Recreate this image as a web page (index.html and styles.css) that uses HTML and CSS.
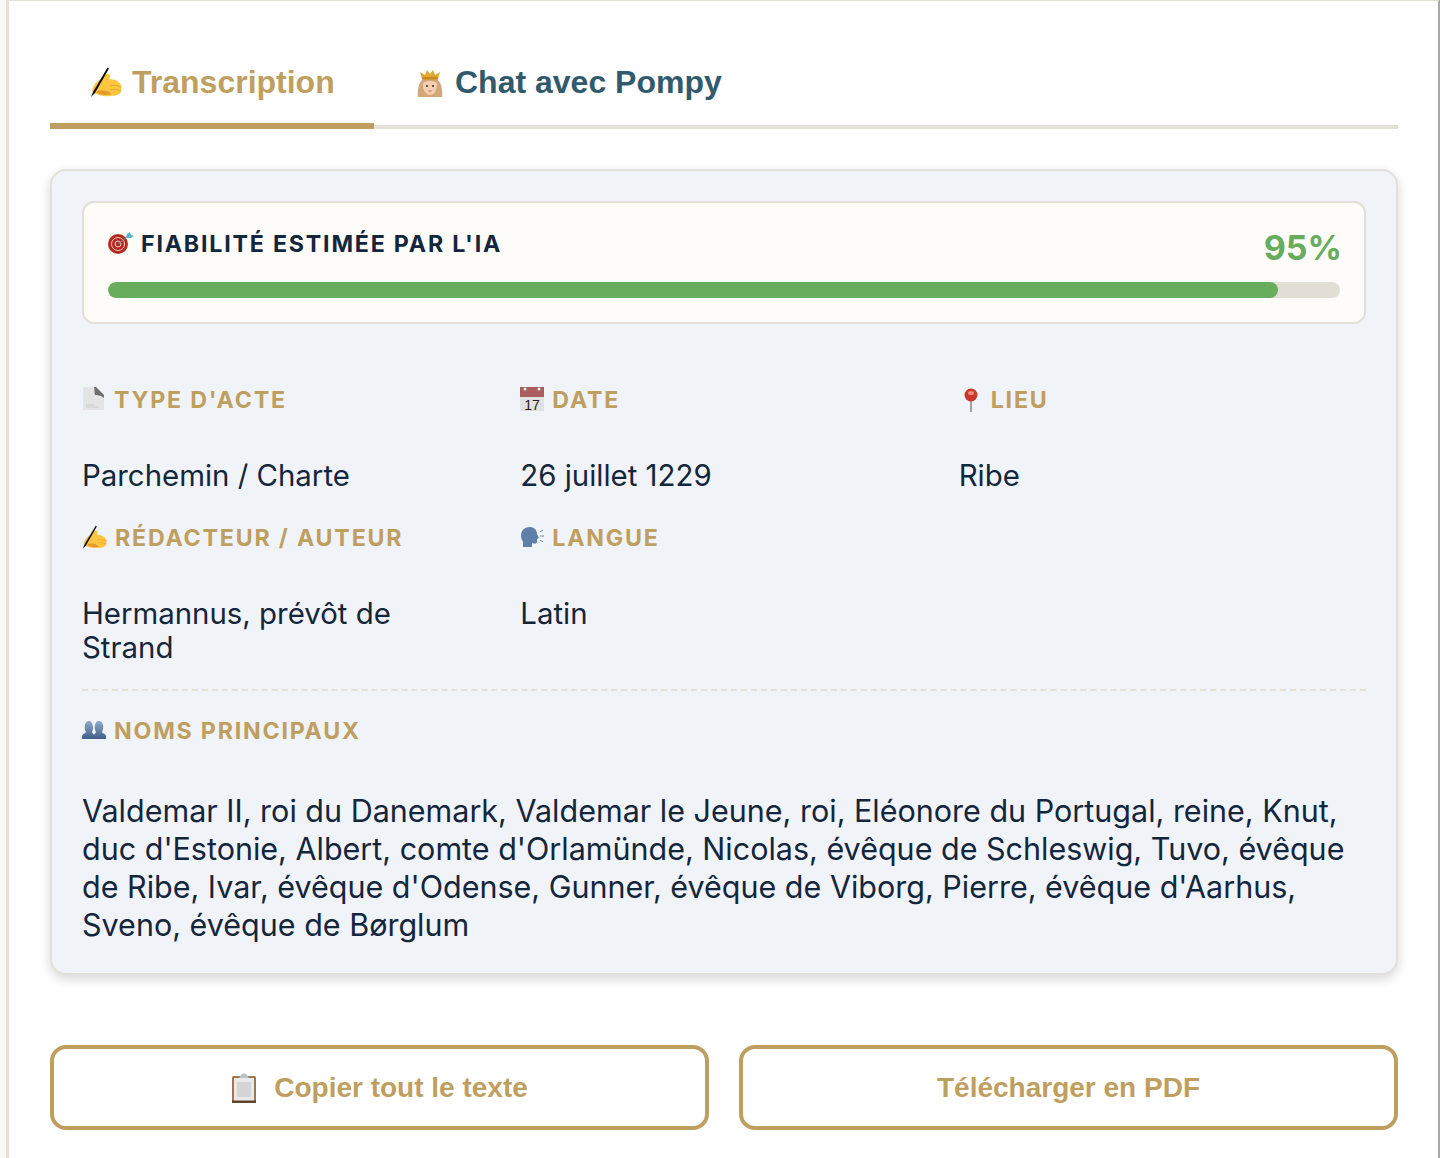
FILE: index.html
```html
<!DOCTYPE html>
<html lang="fr">
<head>
<meta charset="utf-8">
<title>Transcription</title>
<link rel="stylesheet" href="styles.css">
</head>
<body>
<svg class="defs" width="0" height="0" aria-hidden="true">
  <defs>
    <symbol id="i-writing" viewBox="0 0 32 30">
      <path d="M2 24 C3 18 7 14 11 12 L16 7 C18 6 21 8 20 10 L19 12 C24 12 29 14 31 18 C32 23 31 27 27 28 C20 30 8 30 2 24 Z" fill="#fcc63f"/>
      <path d="M6 25 C11 22 17 23 22 27 C16 29 10 28 6 25 Z" fill="#e39c2c"/>
      <path d="M20 19 C23 18 27 18 31 20 M20 23 C23 22 27 22 31 24" stroke="#e8a93a" stroke-width="1" fill="none"/>
      <path d="M1 30 L3 25 L17.500 0.500 L19 1.500 L5 26 Z" fill="#111"/>
    </symbol>
    <symbol id="i-doc" viewBox="-1 0 24 24">
      <path d="M0 0 H13 L21 8 V23 H0 Z" fill="#e4e4e4"/>
      <path d="M11 0 H13 L21 8 V11 C18 8 13 8 12 8 C11 5 12 3 11 0 Z" fill="#6f6f72"/>
      <path d="M3 18 H12 M3 20 H16" stroke="#cfcfcf" stroke-width="1"/>
    </symbol>
    <symbol id="i-cal" viewBox="0 0 24 24">
      <rect width="24" height="24" fill="#e1e1e1"/>
      <rect width="24" height="10" fill="#a85d5f"/>
      <circle cx="5" cy="2" r="1.500" fill="#f5eeee"/>
      <circle cx="19" cy="2" r="1.500" fill="#f5eeee"/>
      <text x="12" y="22.500" class="cal-num" text-anchor="middle">17</text>
    </symbol>
    <symbol id="i-pin" viewBox="0 0 16 24">
      <rect x="7.200" y="11" width="1.600" height="13" fill="#8c8c8c"/>
      <circle cx="8" cy="7" r="6.500" fill="#c9372c"/>
      <ellipse cx="8" cy="5" rx="3" ry="2" fill="#ee8a7e"/>
    </symbol>
    <symbol id="i-speak" viewBox="0 0 24 20">
      <path d="M1 9 C1 3 5 0 10 0 C14 0 17 3 17 7 L19 11 L17 12 V15 C17 16 16 17 14 16.500 L12 16 V20 H3 V15 C2 13 1 11 1 9 Z" fill="#5f80a8"/>
      <path d="M20 5 L23 3 M20 9 H24 M20 13 L23 15" stroke="#6b8bb0" stroke-width="1"/>
    </symbol>
    <symbol id="i-people" viewBox="0 0 24 20">
      <defs>
        <linearGradient id="g-people" x1="0" y1="0" x2="0" y2="1">
          <stop offset="0" stop-color="#8eabc9"/>
          <stop offset="1" stop-color="#3f5f8a"/>
        </linearGradient>
      </defs>
      <path d="M0 19 V16 C0 14 4 13 4 12 C2 9 2 1 7 1 C11 1 12 9 10 12 C10 13 12 14 12 15 C12 14 14 13 14 12 C12 9 12 1 17 1 C22 1 22 9 20 12 C20 13 24 14 24 16 V19 Z" fill="url(#g-people)"/>
    </symbol>
    <symbol id="i-target" viewBox="0 0 26 22">
      <circle cx="10" cy="12" r="10" fill="#b5291f"/>
      <circle cx="10" cy="12" r="6.500" fill="none" stroke="#f0c9c3" stroke-width="1"/>
      <circle cx="10" cy="12" r="3" fill="none" stroke="#f0c9c3" stroke-width="1"/>
      <path d="M10 12 L20 4" stroke="#777" stroke-width="1.300"/>
      <path d="M18 6 L19 2 L22 0 L23 3 L26 4 L23 6 Z" fill="#58b5c9"/>
    </symbol>
    <symbol id="i-queen" viewBox="0 0 26 28">
      <path d="M1 28 C0 20 2 8 13 8 C24 8 26 20 25 28 Z" fill="#d3a878"/>
      <path d="M5 10 L3 3 L8 6 L10 1 L13 5 L16 1 L18 6 L23 3 L21 10 Z" fill="#e0a92c"/>
      <rect x="5" y="8" width="16" height="2.500" fill="#c98a1f"/>
      <path d="M6 15 C6 11 20 11 20 15 C20 22 17 26 13 26 C9 26 6 22 6 15 Z" fill="#f3cfb0"/>
      <circle cx="10" cy="17" r="1" fill="#3d2a1f"/>
      <circle cx="16" cy="17" r="1" fill="#3d2a1f"/>
      <path d="M11.500 22 H14.500" stroke="#b9735f" stroke-width="1"/>
    </symbol>
    <symbol id="i-clip" viewBox="0 0 24 30">
      <rect x="0" y="3" width="24" height="27" rx="1.500" fill="#9c7750"/>
      <rect x="2" y="5" width="20" height="23" fill="#e9e9e9"/>
      <rect x="5" y="9" width="14" height="15" fill="#d4d4d4"/>
      <path d="M7 5 L9 2 C10 0 14 0 15 2 L17 5 Z" fill="#b9c0c8"/>
      <rect x="0" y="27.500" width="24" height="2.500" fill="#5e432a"/>
    </symbol>
  </defs>
</svg>

<main class="page">
  <nav class="tabs">
    <div class="tab tab-active"><svg class="tab-icon" width="34" height="30"><use href="#i-writing"/></svg><span>Transcription</span></div>
    <div class="tab tab-idle"><svg class="tab-icon tab-icon-queen" width="26" height="28"><use href="#i-queen"/></svg><span>Chat avec Pompy</span></div>
  </nav>

  <section class="card">
    <div class="score">
      <div class="score-head">
        <div class="score-title"><svg class="emoji" width="26" height="22"><use href="#i-target"/></svg><span>FIABILITÉ ESTIMÉE PAR L'IA</span></div>
        <div class="score-value">95%</div>
      </div>
      <div class="bar"><div class="bar-fill"></div></div>
    </div>

    <div class="grid">
      <div class="cell">
        <h3 class="label"><svg class="emoji" width="24" height="24"><use href="#i-doc"/></svg>TYPE D'ACTE</h3>
        <p class="value">Parchemin / Charte</p>
      </div>
      <div class="cell">
        <h3 class="label"><svg class="emoji" width="24" height="24"><use href="#i-cal"/></svg>DATE</h3>
        <p class="value">26 juillet 1229</p>
      </div>
      <div class="cell">
        <h3 class="label"><span class="pin-wrap"><svg width="16" height="24"><use href="#i-pin"/></svg></span>LIEU</h3>
        <p class="value">Ribe</p>
      </div>
      <div class="cell">
        <h3 class="label"><svg class="emoji" width="25" height="24"><use href="#i-writing"/></svg>RÉDACTEUR / AUTEUR</h3>
        <p class="value">Hermannus, prévôt de Strand</p>
      </div>
      <div class="cell">
        <h3 class="label"><svg class="emoji" width="24" height="20"><use href="#i-speak"/></svg>LANGUE</h3>
        <p class="value">Latin</p>
      </div>
    </div>

    <div class="names">
      <h3 class="label"><svg class="emoji" width="24" height="20"><use href="#i-people"/></svg>NOMS PRINCIPAUX</h3>
      <p class="value value-names">Valdemar II, roi du Danemark, Valdemar le Jeune, roi, Eléonore du Portugal, reine, Knut, duc d'Estonie, Albert, comte d'Orlamünde, Nicolas, évêque de Schleswig, Tuvo, évêque de Ribe, Ivar, évêque d'Odense, Gunner, évêque de Viborg, Pierre, évêque d'Aarhus, Sveno, évêque de Børglum</p>
    </div>
  </section>

  <div class="actions">
    <button class="btn" type="button"><svg class="btn-icon" width="26" height="30"><use href="#i-clip"/></svg>Copier tout le texte</button>
    <button class="btn" type="button">Télécharger en PDF</button>
  </div>
</main>
</body>
</html>
```

FILE: styles.css
```css
* { box-sizing: border-box; }
html, body { margin: 0; height: 100%; }
body {
  background: #faf8f5;
  height: 1158px;
  overflow: hidden;
  font-family: "Inter", "Liberation Sans", sans-serif;
  color: #14263c;
}
.defs { position: absolute; }
.cal-num { font: 400 14px "Liberation Sans", sans-serif; letter-spacing: 0; fill: #222; }

.page {
  margin-left: 6px;
  width: 1434px;
  height: 1158px;
  background: #fff;
  border-left: 3px solid #e4dfd8;
  border-top: 1px solid #e4dfd8;
  border-right: 2px solid #a9a6ab;
  padding: 39px 40px 0 41px;
}

.tabs {
  display: flex;
  border-bottom: 4px solid #e4dfd8;
  height: 89px;
}
.tab {
  display: flex;
  align-items: center;
  gap: 9px;
  padding: 0 39px 0;
  height: 89px;
  font: 700 32px "Liberation Sans", Arial, sans-serif;
  border-bottom: 6px solid transparent;
}
.tab span { position: relative; top: 1px; }
.tab-active {
  color: #bf9f60;
  border-bottom-color: #bf9f60;
  width: 324px;
}
.tab-idle { color: #315a6d; padding-left: 43px; gap: 12px; }
.tab-icon { flex: none; }
.tab-icon-queen { margin-top: 2px; }

.card {
  margin-top: 40px;
  height: 806px;
  background: #f0f3f7;
  border: 2px solid #e4dfd8;
  border-radius: 16px;
  padding: 30px;
  box-shadow: 0 4px 12px rgba(0, 0, 0, 0.16);
}

.score {
  height: 123px;
  background: #fdfcf9;
  border: 2px solid #e4dfd8;
  border-radius: 12px;
  padding: 24px;
}
.score-head {
  display: flex;
  justify-content: space-between;
  align-items: flex-start;
  height: 55px;
}
.score-title {
  display: flex;
  align-items: center;
  gap: 7px;
  font-size: 23.200px;
  font-weight: 700;
  letter-spacing: 1.800px;
  color: #14263c;
  line-height: 34px;
}
.score-value {
  font-size: 34px;
  font-weight: 700;
  line-height: 42px;
  margin-right: -2px;
  color: #68ad5e;
}
.bar {
  height: 16px;
  background: #e2ded5;
  border-radius: 8px;
  overflow: hidden;
}
.bar-fill {
  width: 95%;
  height: 100%;
  background: #68ad5e;
  border-radius: 8px;
}

.grid {
  display: grid;
  grid-template-columns: repeat(3, 1fr);
  column-gap: 31px;
  row-gap: 15px;
  margin-top: 46px;
  padding-bottom: 24px;
  border-bottom: 2px dashed #e4dfd8;
}
.cell { min-width: 0; }
.label {
  display: flex;
  align-items: center;
  gap: 8px;
  margin: 0;
  height: 60px;
  font-size: 23.200px;
  font-weight: 700;
  letter-spacing: 1.800px;
  color: #bf9f60;
}
.pin-wrap { display: flex; width: 24px; justify-content: center; }
.emoji { flex: none; margin-top: -2px; }
.value {
  margin: 29px 0 0;
  padding-right: 12px;
  font-size: 29.400px;
  line-height: 34px;
  color: #14263c;
}

.names { margin-top: 10px; }
.value-names { font-size: 30.500px; line-height: 38px; margin-top: 31px; padding-right: 0; }

.actions {
  display: grid;
  grid-template-columns: 1fr 1fr;
  gap: 30px;
  margin-top: 70px;
}
.btn {
  display: flex;
  align-items: center;
  justify-content: center;
  gap: 17px;
  height: 85px;
  background: #fff;
  border: 4px solid #bf9f60;
  border-radius: 16px;
  color: #bf9f60;
  font: 700 28px "Liberation Sans", Arial, sans-serif;
  padding: 0;
}
.btn-icon { flex: none; }
```
